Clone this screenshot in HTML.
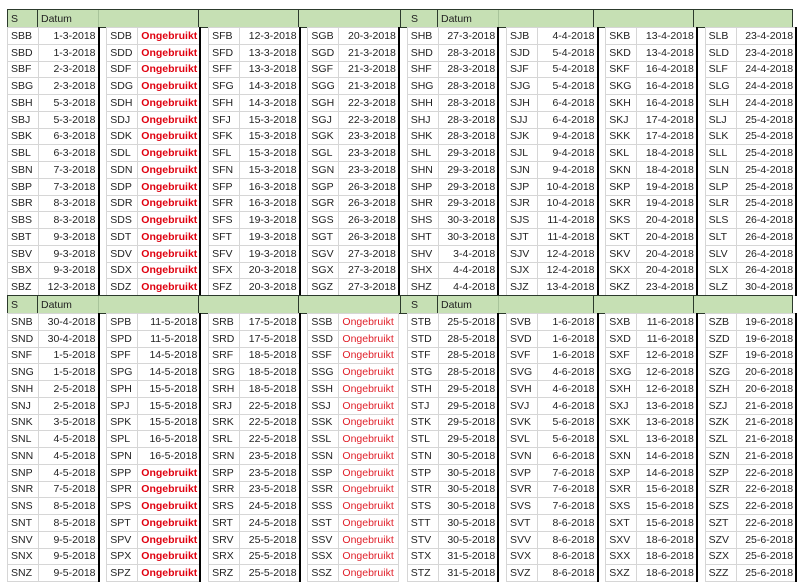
<!DOCTYPE html>
<html><head><meta charset="utf-8"><style>
body{margin:0;width:799px;height:587px;background:#fff;position:relative;overflow:hidden;font-family:"Liberation Sans",Arial,sans-serif}
.h{position:absolute;left:7px;width:784px;height:17px;background:#c6e0b4;border:1px solid #2c3a2c;font-size:10.5px;color:#222}
.h span{position:absolute;top:3px}
.h i{position:absolute;top:0;bottom:0;width:1px;background:#2c3a2c}
.h b{position:absolute;top:0;bottom:0;width:1px;background:#a8c49a}
table{position:absolute;left:7px;border-collapse:collapse;table-layout:fixed}
td{height:15.75px;padding:0 2px 0 3px;font-size:10.5px;color:#222;border:1px solid #d6d6d6;white-space:nowrap;overflow:hidden;line-height:14px}
td.d{text-align:right;border-right:2px solid #000}
td.n{border-right:1px solid #d6d6d6}
td.g{border:none;padding:0}
.o{color:#e0000f;font-weight:bold;text-align:center}
.r{color:#e0202a;text-align:left}
</style></head><body>
<div class="h" style="top:9px"><span style="left:3px">S</span><i style="left:29px"></i><span style="left:33px">Datum</span><b style="left:90px"></b><i style="left:190px"></i><i style="left:290px"></i><i style="left:392px"></i><span style="left:403px">S</span><i style="left:429px"></i><span style="left:433px">Datum</span><b style="left:490px"></b><i style="left:585px"></i><i style="left:685px"></i></div>
<table style="top:27px">
<colgroup><col style="width:31px"><col style="width:60px"><col style="width:8.3px"><col style="width:31px"><col style="width:60px"><col style="width:8.3px"><col style="width:31px"><col style="width:60px"><col style="width:8.3px"><col style="width:31px"><col style="width:60px"><col style="width:8.3px"><col style="width:31px"><col style="width:60px"><col style="width:8.3px"><col style="width:31px"><col style="width:60px"><col style="width:8.3px"><col style="width:31px"><col style="width:60px"><col style="width:8.3px"><col style="width:31px"><col style="width:60px"></colgroup>
<tr><td>SBB</td><td class="d">1-3-2018</td><td class="g"></td><td>SDB</td><td class="d o">Ongebruikt</td><td class="g"></td><td>SFB</td><td class="d">12-3-2018</td><td class="g"></td><td>SGB</td><td class="d">20-3-2018</td><td class="g"></td><td>SHB</td><td class="d">27-3-2018</td><td class="g"></td><td>SJB</td><td class="d">4-4-2018</td><td class="g"></td><td>SKB</td><td class="d">13-4-2018</td><td class="g"></td><td>SLB</td><td class="d">23-4-2018</td></tr>
<tr><td>SBD</td><td class="d">1-3-2018</td><td class="g"></td><td>SDD</td><td class="d o">Ongebruikt</td><td class="g"></td><td>SFD</td><td class="d">13-3-2018</td><td class="g"></td><td>SGD</td><td class="d">21-3-2018</td><td class="g"></td><td>SHD</td><td class="d">28-3-2018</td><td class="g"></td><td>SJD</td><td class="d">5-4-2018</td><td class="g"></td><td>SKD</td><td class="d">13-4-2018</td><td class="g"></td><td>SLD</td><td class="d">23-4-2018</td></tr>
<tr><td>SBF</td><td class="d">2-3-2018</td><td class="g"></td><td>SDF</td><td class="d o">Ongebruikt</td><td class="g"></td><td>SFF</td><td class="d">13-3-2018</td><td class="g"></td><td>SGF</td><td class="d">21-3-2018</td><td class="g"></td><td>SHF</td><td class="d">28-3-2018</td><td class="g"></td><td>SJF</td><td class="d">5-4-2018</td><td class="g"></td><td>SKF</td><td class="d">16-4-2018</td><td class="g"></td><td>SLF</td><td class="d">24-4-2018</td></tr>
<tr><td>SBG</td><td class="d">2-3-2018</td><td class="g"></td><td>SDG</td><td class="d o">Ongebruikt</td><td class="g"></td><td>SFG</td><td class="d">14-3-2018</td><td class="g"></td><td>SGG</td><td class="d">21-3-2018</td><td class="g"></td><td>SHG</td><td class="d">28-3-2018</td><td class="g"></td><td>SJG</td><td class="d">5-4-2018</td><td class="g"></td><td>SKG</td><td class="d">16-4-2018</td><td class="g"></td><td>SLG</td><td class="d">24-4-2018</td></tr>
<tr><td>SBH</td><td class="d">5-3-2018</td><td class="g"></td><td>SDH</td><td class="d o">Ongebruikt</td><td class="g"></td><td>SFH</td><td class="d">14-3-2018</td><td class="g"></td><td>SGH</td><td class="d">22-3-2018</td><td class="g"></td><td>SHH</td><td class="d">28-3-2018</td><td class="g"></td><td>SJH</td><td class="d">6-4-2018</td><td class="g"></td><td>SKH</td><td class="d">16-4-2018</td><td class="g"></td><td>SLH</td><td class="d">24-4-2018</td></tr>
<tr><td>SBJ</td><td class="d">5-3-2018</td><td class="g"></td><td>SDJ</td><td class="d o">Ongebruikt</td><td class="g"></td><td>SFJ</td><td class="d">15-3-2018</td><td class="g"></td><td>SGJ</td><td class="d">22-3-2018</td><td class="g"></td><td>SHJ</td><td class="d">28-3-2018</td><td class="g"></td><td>SJJ</td><td class="d">6-4-2018</td><td class="g"></td><td>SKJ</td><td class="d">17-4-2018</td><td class="g"></td><td>SLJ</td><td class="d">25-4-2018</td></tr>
<tr><td>SBK</td><td class="d">6-3-2018</td><td class="g"></td><td>SDK</td><td class="d o">Ongebruikt</td><td class="g"></td><td>SFK</td><td class="d">15-3-2018</td><td class="g"></td><td>SGK</td><td class="d">23-3-2018</td><td class="g"></td><td>SHK</td><td class="d">28-3-2018</td><td class="g"></td><td>SJK</td><td class="d">9-4-2018</td><td class="g"></td><td>SKK</td><td class="d">17-4-2018</td><td class="g"></td><td>SLK</td><td class="d">25-4-2018</td></tr>
<tr><td>SBL</td><td class="d">6-3-2018</td><td class="g"></td><td>SDL</td><td class="d o">Ongebruikt</td><td class="g"></td><td>SFL</td><td class="d">15-3-2018</td><td class="g"></td><td>SGL</td><td class="d">23-3-2018</td><td class="g"></td><td>SHL</td><td class="d">29-3-2018</td><td class="g"></td><td>SJL</td><td class="d">9-4-2018</td><td class="g"></td><td>SKL</td><td class="d">18-4-2018</td><td class="g"></td><td>SLL</td><td class="d">25-4-2018</td></tr>
<tr><td>SBN</td><td class="d">7-3-2018</td><td class="g"></td><td>SDN</td><td class="d o">Ongebruikt</td><td class="g"></td><td>SFN</td><td class="d">15-3-2018</td><td class="g"></td><td>SGN</td><td class="d">23-3-2018</td><td class="g"></td><td>SHN</td><td class="d">29-3-2018</td><td class="g"></td><td>SJN</td><td class="d">9-4-2018</td><td class="g"></td><td>SKN</td><td class="d">18-4-2018</td><td class="g"></td><td>SLN</td><td class="d">25-4-2018</td></tr>
<tr><td>SBP</td><td class="d">7-3-2018</td><td class="g"></td><td>SDP</td><td class="d o">Ongebruikt</td><td class="g"></td><td>SFP</td><td class="d">16-3-2018</td><td class="g"></td><td>SGP</td><td class="d">26-3-2018</td><td class="g"></td><td>SHP</td><td class="d">29-3-2018</td><td class="g"></td><td>SJP</td><td class="d">10-4-2018</td><td class="g"></td><td>SKP</td><td class="d">19-4-2018</td><td class="g"></td><td>SLP</td><td class="d">25-4-2018</td></tr>
<tr><td>SBR</td><td class="d">8-3-2018</td><td class="g"></td><td>SDR</td><td class="d o">Ongebruikt</td><td class="g"></td><td>SFR</td><td class="d">16-3-2018</td><td class="g"></td><td>SGR</td><td class="d">26-3-2018</td><td class="g"></td><td>SHR</td><td class="d">29-3-2018</td><td class="g"></td><td>SJR</td><td class="d">10-4-2018</td><td class="g"></td><td>SKR</td><td class="d">19-4-2018</td><td class="g"></td><td>SLR</td><td class="d">25-4-2018</td></tr>
<tr><td>SBS</td><td class="d">8-3-2018</td><td class="g"></td><td>SDS</td><td class="d o">Ongebruikt</td><td class="g"></td><td>SFS</td><td class="d">19-3-2018</td><td class="g"></td><td>SGS</td><td class="d">26-3-2018</td><td class="g"></td><td>SHS</td><td class="d">30-3-2018</td><td class="g"></td><td>SJS</td><td class="d">11-4-2018</td><td class="g"></td><td>SKS</td><td class="d">20-4-2018</td><td class="g"></td><td>SLS</td><td class="d">26-4-2018</td></tr>
<tr><td>SBT</td><td class="d">9-3-2018</td><td class="g"></td><td>SDT</td><td class="d o">Ongebruikt</td><td class="g"></td><td>SFT</td><td class="d">19-3-2018</td><td class="g"></td><td>SGT</td><td class="d">26-3-2018</td><td class="g"></td><td>SHT</td><td class="d">30-3-2018</td><td class="g"></td><td>SJT</td><td class="d">11-4-2018</td><td class="g"></td><td>SKT</td><td class="d">20-4-2018</td><td class="g"></td><td>SLT</td><td class="d">26-4-2018</td></tr>
<tr><td>SBV</td><td class="d">9-3-2018</td><td class="g"></td><td>SDV</td><td class="d o">Ongebruikt</td><td class="g"></td><td>SFV</td><td class="d">19-3-2018</td><td class="g"></td><td>SGV</td><td class="d">27-3-2018</td><td class="g"></td><td>SHV</td><td class="d">3-4-2018</td><td class="g"></td><td>SJV</td><td class="d">12-4-2018</td><td class="g"></td><td>SKV</td><td class="d">20-4-2018</td><td class="g"></td><td>SLV</td><td class="d">26-4-2018</td></tr>
<tr><td>SBX</td><td class="d">9-3-2018</td><td class="g"></td><td>SDX</td><td class="d o">Ongebruikt</td><td class="g"></td><td>SFX</td><td class="d">20-3-2018</td><td class="g"></td><td>SGX</td><td class="d">27-3-2018</td><td class="g"></td><td>SHX</td><td class="d">4-4-2018</td><td class="g"></td><td>SJX</td><td class="d">12-4-2018</td><td class="g"></td><td>SKX</td><td class="d">20-4-2018</td><td class="g"></td><td>SLX</td><td class="d">26-4-2018</td></tr>
<tr><td>SBZ</td><td class="d">12-3-2018</td><td class="g"></td><td>SDZ</td><td class="d o">Ongebruikt</td><td class="g"></td><td>SFZ</td><td class="d">20-3-2018</td><td class="g"></td><td>SGZ</td><td class="d">27-3-2018</td><td class="g"></td><td>SHZ</td><td class="d">4-4-2018</td><td class="g"></td><td>SJZ</td><td class="d">13-4-2018</td><td class="g"></td><td>SKZ</td><td class="d">23-4-2018</td><td class="g"></td><td>SLZ</td><td class="d">30-4-2018</td></tr>
</table>
<div class="h" style="top:295px"><span style="left:3px">S</span><i style="left:29px"></i><span style="left:33px">Datum</span><b style="left:90px"></b><i style="left:190px"></i><i style="left:290px"></i><i style="left:392px"></i><span style="left:403px">S</span><i style="left:429px"></i><span style="left:433px">Datum</span><b style="left:490px"></b><i style="left:585px"></i><i style="left:685px"></i></div>
<table style="top:313px">
<colgroup><col style="width:31px"><col style="width:60px"><col style="width:8.3px"><col style="width:31px"><col style="width:60px"><col style="width:8.3px"><col style="width:31px"><col style="width:60px"><col style="width:8.3px"><col style="width:31px"><col style="width:60px"><col style="width:8.3px"><col style="width:31px"><col style="width:60px"><col style="width:8.3px"><col style="width:31px"><col style="width:60px"><col style="width:8.3px"><col style="width:31px"><col style="width:60px"><col style="width:8.3px"><col style="width:31px"><col style="width:60px"></colgroup>
<tr><td>SNB</td><td class="d">30-4-2018</td><td class="g"></td><td>SPB</td><td class="d">11-5-2018</td><td class="g"></td><td>SRB</td><td class="d">17-5-2018</td><td class="g"></td><td>SSB</td><td class="n r">Ongebruikt</td><td class="g"></td><td>STB</td><td class="d">25-5-2018</td><td class="g"></td><td>SVB</td><td class="d">1-6-2018</td><td class="g"></td><td>SXB</td><td class="d">11-6-2018</td><td class="g"></td><td>SZB</td><td class="d">19-6-2018</td></tr>
<tr><td>SND</td><td class="d">30-4-2018</td><td class="g"></td><td>SPD</td><td class="d">11-5-2018</td><td class="g"></td><td>SRD</td><td class="d">17-5-2018</td><td class="g"></td><td>SSD</td><td class="n r">Ongebruikt</td><td class="g"></td><td>STD</td><td class="d">28-5-2018</td><td class="g"></td><td>SVD</td><td class="d">1-6-2018</td><td class="g"></td><td>SXD</td><td class="d">11-6-2018</td><td class="g"></td><td>SZD</td><td class="d">19-6-2018</td></tr>
<tr><td>SNF</td><td class="d">1-5-2018</td><td class="g"></td><td>SPF</td><td class="d">14-5-2018</td><td class="g"></td><td>SRF</td><td class="d">18-5-2018</td><td class="g"></td><td>SSF</td><td class="n r">Ongebruikt</td><td class="g"></td><td>STF</td><td class="d">28-5-2018</td><td class="g"></td><td>SVF</td><td class="d">1-6-2018</td><td class="g"></td><td>SXF</td><td class="d">12-6-2018</td><td class="g"></td><td>SZF</td><td class="d">19-6-2018</td></tr>
<tr><td>SNG</td><td class="d">1-5-2018</td><td class="g"></td><td>SPG</td><td class="d">14-5-2018</td><td class="g"></td><td>SRG</td><td class="d">18-5-2018</td><td class="g"></td><td>SSG</td><td class="n r">Ongebruikt</td><td class="g"></td><td>STG</td><td class="d">28-5-2018</td><td class="g"></td><td>SVG</td><td class="d">4-6-2018</td><td class="g"></td><td>SXG</td><td class="d">12-6-2018</td><td class="g"></td><td>SZG</td><td class="d">20-6-2018</td></tr>
<tr><td>SNH</td><td class="d">2-5-2018</td><td class="g"></td><td>SPH</td><td class="d">15-5-2018</td><td class="g"></td><td>SRH</td><td class="d">18-5-2018</td><td class="g"></td><td>SSH</td><td class="n r">Ongebruikt</td><td class="g"></td><td>STH</td><td class="d">29-5-2018</td><td class="g"></td><td>SVH</td><td class="d">4-6-2018</td><td class="g"></td><td>SXH</td><td class="d">12-6-2018</td><td class="g"></td><td>SZH</td><td class="d">20-6-2018</td></tr>
<tr><td>SNJ</td><td class="d">2-5-2018</td><td class="g"></td><td>SPJ</td><td class="d">15-5-2018</td><td class="g"></td><td>SRJ</td><td class="d">22-5-2018</td><td class="g"></td><td>SSJ</td><td class="n r">Ongebruikt</td><td class="g"></td><td>STJ</td><td class="d">29-5-2018</td><td class="g"></td><td>SVJ</td><td class="d">4-6-2018</td><td class="g"></td><td>SXJ</td><td class="d">13-6-2018</td><td class="g"></td><td>SZJ</td><td class="d">21-6-2018</td></tr>
<tr><td>SNK</td><td class="d">3-5-2018</td><td class="g"></td><td>SPK</td><td class="d">15-5-2018</td><td class="g"></td><td>SRK</td><td class="d">22-5-2018</td><td class="g"></td><td>SSK</td><td class="n r">Ongebruikt</td><td class="g"></td><td>STK</td><td class="d">29-5-2018</td><td class="g"></td><td>SVK</td><td class="d">5-6-2018</td><td class="g"></td><td>SXK</td><td class="d">13-6-2018</td><td class="g"></td><td>SZK</td><td class="d">21-6-2018</td></tr>
<tr><td>SNL</td><td class="d">4-5-2018</td><td class="g"></td><td>SPL</td><td class="d">16-5-2018</td><td class="g"></td><td>SRL</td><td class="d">22-5-2018</td><td class="g"></td><td>SSL</td><td class="n r">Ongebruikt</td><td class="g"></td><td>STL</td><td class="d">29-5-2018</td><td class="g"></td><td>SVL</td><td class="d">5-6-2018</td><td class="g"></td><td>SXL</td><td class="d">13-6-2018</td><td class="g"></td><td>SZL</td><td class="d">21-6-2018</td></tr>
<tr><td>SNN</td><td class="d">4-5-2018</td><td class="g"></td><td>SPN</td><td class="d">16-5-2018</td><td class="g"></td><td>SRN</td><td class="d">23-5-2018</td><td class="g"></td><td>SSN</td><td class="n r">Ongebruikt</td><td class="g"></td><td>STN</td><td class="d">30-5-2018</td><td class="g"></td><td>SVN</td><td class="d">6-6-2018</td><td class="g"></td><td>SXN</td><td class="d">14-6-2018</td><td class="g"></td><td>SZN</td><td class="d">21-6-2018</td></tr>
<tr><td>SNP</td><td class="d">4-5-2018</td><td class="g"></td><td>SPP</td><td class="d o">Ongebruikt</td><td class="g"></td><td>SRP</td><td class="d">23-5-2018</td><td class="g"></td><td>SSP</td><td class="n r">Ongebruikt</td><td class="g"></td><td>STP</td><td class="d">30-5-2018</td><td class="g"></td><td>SVP</td><td class="d">7-6-2018</td><td class="g"></td><td>SXP</td><td class="d">14-6-2018</td><td class="g"></td><td>SZP</td><td class="d">22-6-2018</td></tr>
<tr><td>SNR</td><td class="d">7-5-2018</td><td class="g"></td><td>SPR</td><td class="d o">Ongebruikt</td><td class="g"></td><td>SRR</td><td class="d">23-5-2018</td><td class="g"></td><td>SSR</td><td class="n r">Ongebruikt</td><td class="g"></td><td>STR</td><td class="d">30-5-2018</td><td class="g"></td><td>SVR</td><td class="d">7-6-2018</td><td class="g"></td><td>SXR</td><td class="d">15-6-2018</td><td class="g"></td><td>SZR</td><td class="d">22-6-2018</td></tr>
<tr><td>SNS</td><td class="d">8-5-2018</td><td class="g"></td><td>SPS</td><td class="d o">Ongebruikt</td><td class="g"></td><td>SRS</td><td class="d">24-5-2018</td><td class="g"></td><td>SSS</td><td class="n r">Ongebruikt</td><td class="g"></td><td>STS</td><td class="d">30-5-2018</td><td class="g"></td><td>SVS</td><td class="d">7-6-2018</td><td class="g"></td><td>SXS</td><td class="d">15-6-2018</td><td class="g"></td><td>SZS</td><td class="d">22-6-2018</td></tr>
<tr><td>SNT</td><td class="d">8-5-2018</td><td class="g"></td><td>SPT</td><td class="d o">Ongebruikt</td><td class="g"></td><td>SRT</td><td class="d">24-5-2018</td><td class="g"></td><td>SST</td><td class="n r">Ongebruikt</td><td class="g"></td><td>STT</td><td class="d">30-5-2018</td><td class="g"></td><td>SVT</td><td class="d">8-6-2018</td><td class="g"></td><td>SXT</td><td class="d">15-6-2018</td><td class="g"></td><td>SZT</td><td class="d">22-6-2018</td></tr>
<tr><td>SNV</td><td class="d">9-5-2018</td><td class="g"></td><td>SPV</td><td class="d o">Ongebruikt</td><td class="g"></td><td>SRV</td><td class="d">25-5-2018</td><td class="g"></td><td>SSV</td><td class="n r">Ongebruikt</td><td class="g"></td><td>STV</td><td class="d">30-5-2018</td><td class="g"></td><td>SVV</td><td class="d">8-6-2018</td><td class="g"></td><td>SXV</td><td class="d">18-6-2018</td><td class="g"></td><td>SZV</td><td class="d">25-6-2018</td></tr>
<tr><td>SNX</td><td class="d">9-5-2018</td><td class="g"></td><td>SPX</td><td class="d o">Ongebruikt</td><td class="g"></td><td>SRX</td><td class="d">25-5-2018</td><td class="g"></td><td>SSX</td><td class="n r">Ongebruikt</td><td class="g"></td><td>STX</td><td class="d">31-5-2018</td><td class="g"></td><td>SVX</td><td class="d">8-6-2018</td><td class="g"></td><td>SXX</td><td class="d">18-6-2018</td><td class="g"></td><td>SZX</td><td class="d">25-6-2018</td></tr>
<tr><td>SNZ</td><td class="d">9-5-2018</td><td class="g"></td><td>SPZ</td><td class="d o">Ongebruikt</td><td class="g"></td><td>SRZ</td><td class="d">25-5-2018</td><td class="g"></td><td>SSZ</td><td class="n r">Ongebruikt</td><td class="g"></td><td>STZ</td><td class="d">31-5-2018</td><td class="g"></td><td>SVZ</td><td class="d">8-6-2018</td><td class="g"></td><td>SXZ</td><td class="d">18-6-2018</td><td class="g"></td><td>SZZ</td><td class="d">25-6-2018</td></tr>
</table>
</body></html>
